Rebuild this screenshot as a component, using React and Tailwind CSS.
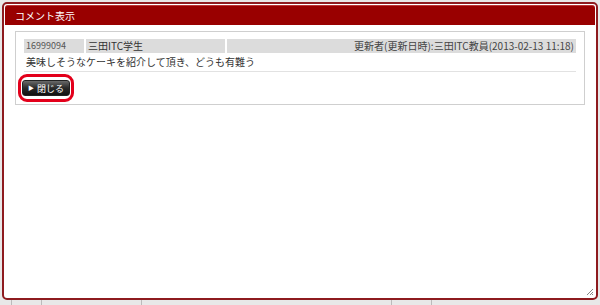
export default function App() {
  const jp = { fontFamily: '"Noto Sans CJK JP", "Noto Sans", sans-serif' };
  return (
    <div className="w-[600px] h-[305px] bg-[#e8e8e8] flex flex-col overflow-hidden" style={jp}>
      <div className="relative mx-[2px] mt-[2px] h-[298px] bg-white border-2 border-[#8e1b1f] rounded-[5px] flex flex-col p-[1px]">
        <div className="h-[20px] bg-[#990000] border-t border-[#b33] rounded-t-[3px] flex items-center pl-[10px] text-white text-[10px]">
          コメント表示
        </div>
        <div className="mx-[10px] mt-[6px] h-[74px] border border-[#cfcfcf] flex flex-col px-[8px] pt-[7px]">
          <div className="border-b border-[#e2e2e2] flex flex-col">
            <div className="flex h-[14px] text-[10px] leading-[14px] gap-[2px]">
              <div className="w-[60px] bg-[#dcdcdc] text-[#555] pl-[2px] text-[9px]">16999094</div>
              <div className="w-[139px] bg-[#dcdcdc] text-[#333] pl-[2px]">三田ITC学生</div>
              <div className="flex-1 bg-[#dcdcdc] text-[#444] text-right pr-[2px]">更新者(更新日時):三田ITC教員(2013-02-13 11:18)</div>
            </div>
            <div className="h-[18px] text-[10px] leading-[18px] text-[#333] pl-[2px]">美味しそうなケーキを紹介して頂き、どうも有難う</div>
          </div>
          <div className="mt-[2px] ml-[-6px] w-[56px] h-[28px] border-[3px] border-[#e3001b] rounded-[9px] flex items-center justify-center">
            <div className="w-[48px] h-[16px] rounded-[3px] bg-gradient-to-b from-[#6a6a6a] via-[#2a2a2a] to-[#111] border border-[#222] flex items-center pl-[5px] text-white text-[9px] leading-none gap-[3px]">
              <span className="text-[6px]">▶</span>
              <span>閉じる</span>
            </div>
          </div>
        </div>
        <svg className="absolute right-[2px] bottom-[2px]" width="8" height="8" viewBox="0 0 8 8">
          <path d="M7 1 L1 7 M7 4 L4 7 M7 6 L6 7" stroke="#888" strokeWidth="1" />
        </svg>
      </div>
      <div className="flex-1 flex">
        <div className="w-[12px] border-r border-[#bbb]" />
        <div className="w-[30px] border-r border-[#bbb]" />
        <div className="w-[100px] border-r border-[#bbb]" />
        <div className="w-[250px] border-r border-[#bbb]" />
        <div className="w-[40px] border-r border-[#bbb]" />
      </div>
    </div>
  );
}
